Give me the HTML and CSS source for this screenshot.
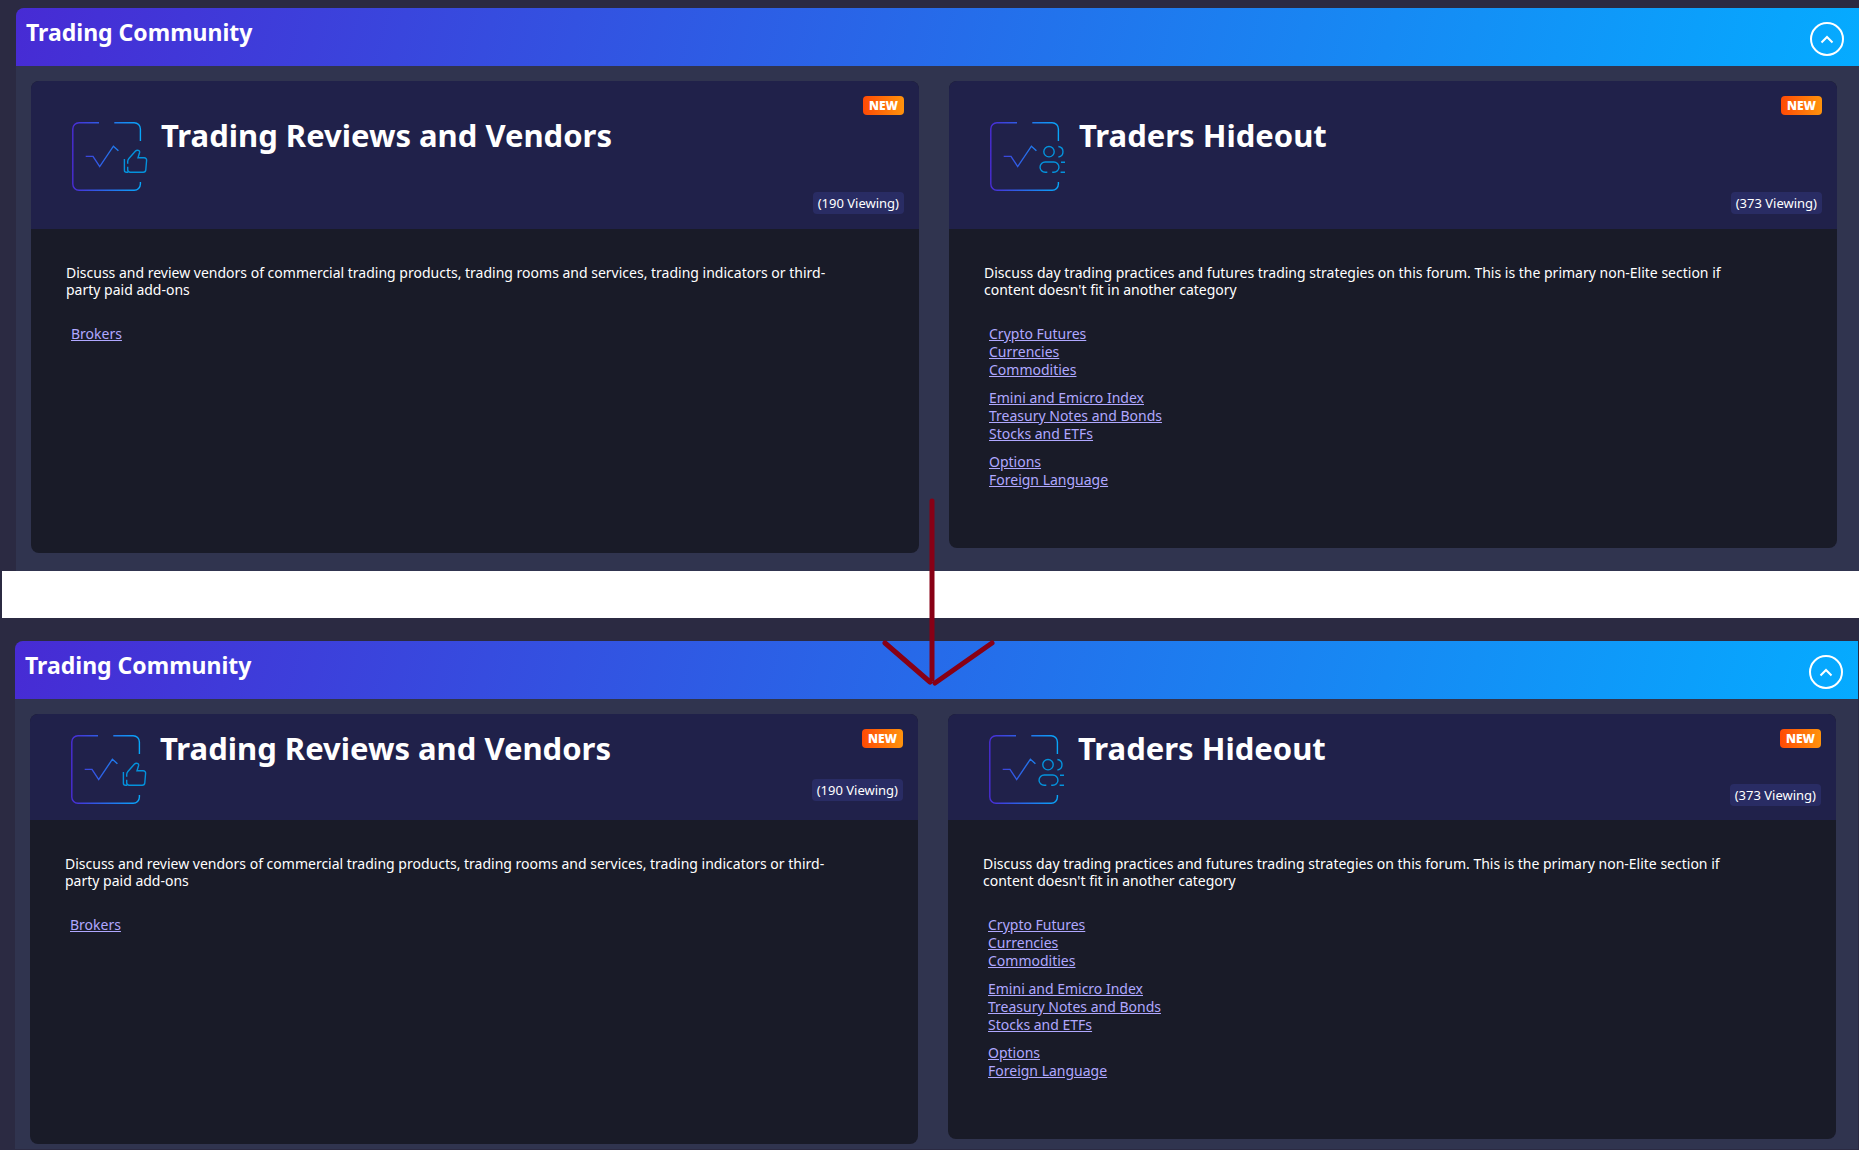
FILE: index.html
```html
<!DOCTYPE html>
<html lang="en">
<head>
    <meta charset="UTF-8">
    <meta name="viewport" content="width=device-width, initial-scale=1.0">
    <title>Trading Community</title>
    <link rel="stylesheet" href="styles.css">
</head>
<body>
    <!-- Shared icon shapes -->
    <svg class="sprite" aria-hidden="true">
        <defs>
            <linearGradient id="frame-gradient" gradientUnits="userSpaceOnUse" x1="2" y1="0" x2="72" y2="0">
                <stop offset="0" stop-color="#4a2bd6"/>
                <stop offset="1" stop-color="#06a9fb"/>
            </linearGradient>
            <g id="frame" fill="none" stroke="url(#frame-gradient)" stroke-width="1.4">
                <path d="M29 2.7H9a6.2 6.2 0 0 0-6.2 6.2V64A6.2 6.2 0 0 0 9 70.2h55.2a6.2 6.2 0 0 0 6.2-6.2v-2"/>
                <path d="M44.3 2.7h19.9a6.2 6.2 0 0 1 6.2 6.2v12"/>
                <path d="M15.7 36.4H23l6.7 10.2 13.7-20.4 5 4.5"/>
            </g>
            <g id="icon-reviews">
                <use href="#frame"/>
                <g fill="none" stroke="#0492dc" stroke-width="1.4">
                    <path d="M54.4 39v11.2a2 2 0 0 0 2 2h1.6"/>
                    <path d="M57.7 43.7v-2.2c0-1.2.4-2.1 1.2-3l6.4-7.2c1.6-1.8 4.9-1.2 4.3 1.2L68 37.7h6.2a2.4 2.4 0 0 1 2.4 2.6l-.8 9.6a2.6 2.6 0 0 1-2.6 2.4H60.2a2.5 2.5 0 0 1-2.5-2.5v-3"/>
                </g>
            </g>
            <g id="icon-hideout">
                <use href="#frame"/>
                <g fill="none" stroke="#0492dc" stroke-width="1.4">
                    <circle cx="61" cy="31.7" r="5.2"/>
                    <path d="M70.4 26.5a5.3 5.3 0 0 1 0 10.5"/>
                    <path d="M59.3 52.3h-2.1a5.1 5.1 0 0 1 0-10.3h8.6a5.1 5.1 0 0 1 0 10.3h-1.6"/>
                    <path d="M73 42.3h4M72.6 52.3H77"/>
                </g>
            </g>
        </defs>
    </svg>

    <section class="category">
        <header class="category-header">
            <h2 class="category-title">Trading Community</h2>
            <button class="collapse-btn" type="button" aria-label="Collapse">
                <svg width="14" height="9" viewBox="0 0 14 9"><path d="M1.5 7.5L7 2l5.5 5.5" fill="none" stroke="#fff" stroke-width="2"/></svg>
            </button>
        </header>
        <div class="forums">
            <article class="forum forum-tall">
                <div class="forum-head">
                    <svg class="forum-icon" viewBox="0 0 80 74" aria-hidden="true"><use href="#icon-reviews"/></svg>
                    <h3 class="forum-title">Trading Reviews and Vendors</h3>
                    <div class="forum-meta">
                        <span class="badge-new">NEW</span>
                        <span class="viewing">(190 Viewing)</span>
                    </div>
                </div>
                <div class="forum-body">
                    <p class="forum-desc">Discuss and review vendors of commercial trading products, trading rooms and services, trading indicators or third-party paid add-ons</p>
                    <ul class="links">
                        <li><a href="#">Brokers</a></li>
                    </ul>
                </div>
            </article>
            <article class="forum">
                <div class="forum-head">
                    <svg class="forum-icon" viewBox="0 0 80 74" aria-hidden="true"><use href="#icon-hideout"/></svg>
                    <h3 class="forum-title">Traders Hideout</h3>
                    <div class="forum-meta">
                        <span class="badge-new">NEW</span>
                        <span class="viewing">(373 Viewing)</span>
                    </div>
                </div>
                <div class="forum-body">
                    <p class="forum-desc">Discuss day trading practices and futures trading strategies on this forum. This is the primary non-Elite section if content doesn't fit in another category</p>
                    <ul class="links">
                        <li><a href="#">Crypto Futures</a></li>
                        <li><a href="#">Currencies</a></li>
                        <li><a href="#">Commodities</a></li>
                    </ul>
                    <ul class="links">
                        <li><a href="#">Emini and Emicro Index</a></li>
                        <li><a href="#">Treasury Notes and Bonds</a></li>
                        <li><a href="#">Stocks and ETFs</a></li>
                    </ul>
                    <ul class="links">
                        <li><a href="#">Options</a></li>
                        <li><a href="#">Foreign Language</a></li>
                    </ul>
                </div>
            </article>
        </div>
    </section>

    <div class="divider">
        <svg class="arrow" width="120" height="190" viewBox="0 0 120 190" aria-hidden="true">
            <path d="M55 4v178M8 146l45 39M115 146l-57 40" fill="none" stroke="#880015" stroke-width="5" stroke-linecap="round"/>
        </svg>
    </div>

    <section class="category category-compact">
        <header class="category-header">
            <h2 class="category-title">Trading Community</h2>
            <button class="collapse-btn" type="button" aria-label="Collapse">
                <svg width="14" height="9" viewBox="0 0 14 9"><path d="M1.5 7.5L7 2l5.5 5.5" fill="none" stroke="#fff" stroke-width="2"/></svg>
            </button>
        </header>
        <div class="forums">
            <article class="forum forum-tall">
                <div class="forum-head">
                    <svg class="forum-icon" viewBox="0 0 80 74" aria-hidden="true"><use href="#icon-reviews"/></svg>
                    <h3 class="forum-title">Trading Reviews and Vendors</h3>
                    <div class="forum-meta">
                        <span class="badge-new">NEW</span>
                        <span class="viewing">(190 Viewing)</span>
                    </div>
                </div>
                <div class="forum-body">
                    <p class="forum-desc">Discuss and review vendors of commercial trading products, trading rooms and services, trading indicators or third-party paid add-ons</p>
                    <ul class="links">
                        <li><a href="#">Brokers</a></li>
                    </ul>
                </div>
            </article>
            <article class="forum">
                <div class="forum-head">
                    <svg class="forum-icon" viewBox="0 0 80 74" aria-hidden="true"><use href="#icon-hideout"/></svg>
                    <h3 class="forum-title">Traders Hideout</h3>
                    <div class="forum-meta">
                        <span class="badge-new">NEW</span>
                        <span class="viewing">(373 Viewing)</span>
                    </div>
                </div>
                <div class="forum-body">
                    <p class="forum-desc">Discuss day trading practices and futures trading strategies on this forum. This is the primary non-Elite section if content doesn't fit in another category</p>
                    <ul class="links">
                        <li><a href="#">Crypto Futures</a></li>
                        <li><a href="#">Currencies</a></li>
                        <li><a href="#">Commodities</a></li>
                    </ul>
                    <ul class="links">
                        <li><a href="#">Emini and Emicro Index</a></li>
                        <li><a href="#">Treasury Notes and Bonds</a></li>
                        <li><a href="#">Stocks and ETFs</a></li>
                    </ul>
                    <ul class="links">
                        <li><a href="#">Options</a></li>
                        <li><a href="#">Foreign Language</a></li>
                    </ul>
                </div>
            </article>
        </div>
    </section>
</body>
</html>
```

FILE: styles.css
```css
* {
    box-sizing: border-box;
}

body {
    margin: 0;
    padding-top: 8px;
    background: #2b2a42;
    color: #fff;
    font-family: "Noto Sans", "Open Sans", sans-serif;
    font-size: 14px;
    line-height: 17px;
}

h2, h3, p, ul {
    margin: 0;
    padding: 0;
}

.sprite {
    position: absolute;
    width: 0;
    height: 0;
}

/* Category */
.category {
    margin-left: 16px;
    background: #30344f;
    border-radius: 8px 0 0 0;
}

.category-header {
    display: flex;
    justify-content: space-between;
    align-items: flex-start;
    height: 58px;
    padding: 8px 15px 0 10px;
    background: linear-gradient(105deg, #472bd4, #05abff);
    border-radius: 8px 0 0 0;
}

.category-title {
    font-size: 23px;
    line-height: 32px;
}

.collapse-btn {
    display: flex;
    align-items: center;
    justify-content: center;
    width: 34px;
    height: 34px;
    margin-top: 6px;
    padding: 0;
    background: none;
    border: 2px solid #fff;
    border-radius: 50%;
    cursor: pointer;
}

/* Forum cards */
.forums {
    display: grid;
    grid-template-columns: 1fr 1fr;
    align-items: start;
    gap: 30px;
    padding: 15px 22px 18px 15px;
}

.forum {
    background: #191b28;
    border-radius: 8px;
    overflow: hidden;
}

.forum-head {
    display: flex;
    height: 148px;
    padding: 15px 15px 15px 39px;
    background: #20214a;
}

.forum-icon {
    flex: none;
    width: 80px;
    height: 74px;
    margin-top: 24px;
}

.forum-title {
    flex: 1;
    margin: 18px 0 0 11px;
    font-size: 31px;
    line-height: 42px;
}

.forum-meta {
    display: flex;
    flex-direction: column;
    justify-content: space-between;
    align-items: flex-end;
}

.badge-new {
    padding: 0 6px;
    background: linear-gradient(90deg, #ff4a05, #ff930c);
    border-radius: 4px;
    font-size: 12px;
    font-weight: 900;
    line-height: 19px;
}

.viewing {
    padding: 0 5px;
    background: #292c64;
    border-radius: 4px;
    font-size: 13px;
    line-height: 22px;
}

.forum-body {
    min-height: 319px;
    padding: 35px 70px 35px 35px;
}

.forum-tall .forum-body {
    min-height: 324px;
}

.forum-desc {
    margin-bottom: 27px;
}

.links {
    margin-bottom: 10px;
    padding-left: 5px;
    list-style: none;
    line-height: 18px;
}

.links a {
    color: #b0a8ff;
}

/* White strip between the two versions */
.divider {
    position: relative;
    height: 47px;
    margin-left: 2px;
    background: #fff;
}

.arrow {
    position: absolute;
    left: calc(50% - 54px);
    bottom: -69px;
}

/* Compact version */
.category-compact {
    margin: 23px 1px 1px 15px;
}

.category-compact .forums {
    padding-bottom: 5px;
}

.category-compact .forum-head {
    height: 106px;
    padding-bottom: 14px;
}

.category-compact .forum-tall .forum-head {
    padding-bottom: 19px;
}

.category-compact .forum-icon {
    margin-top: 4px;
}

.category-compact .forum-title {
    margin-top: -2px;
}

@media screen and (max-width: 900px) {
    .forums {
        grid-template-columns: 1fr;
    }

    .arrow {
        display: none;
    }
}
```
